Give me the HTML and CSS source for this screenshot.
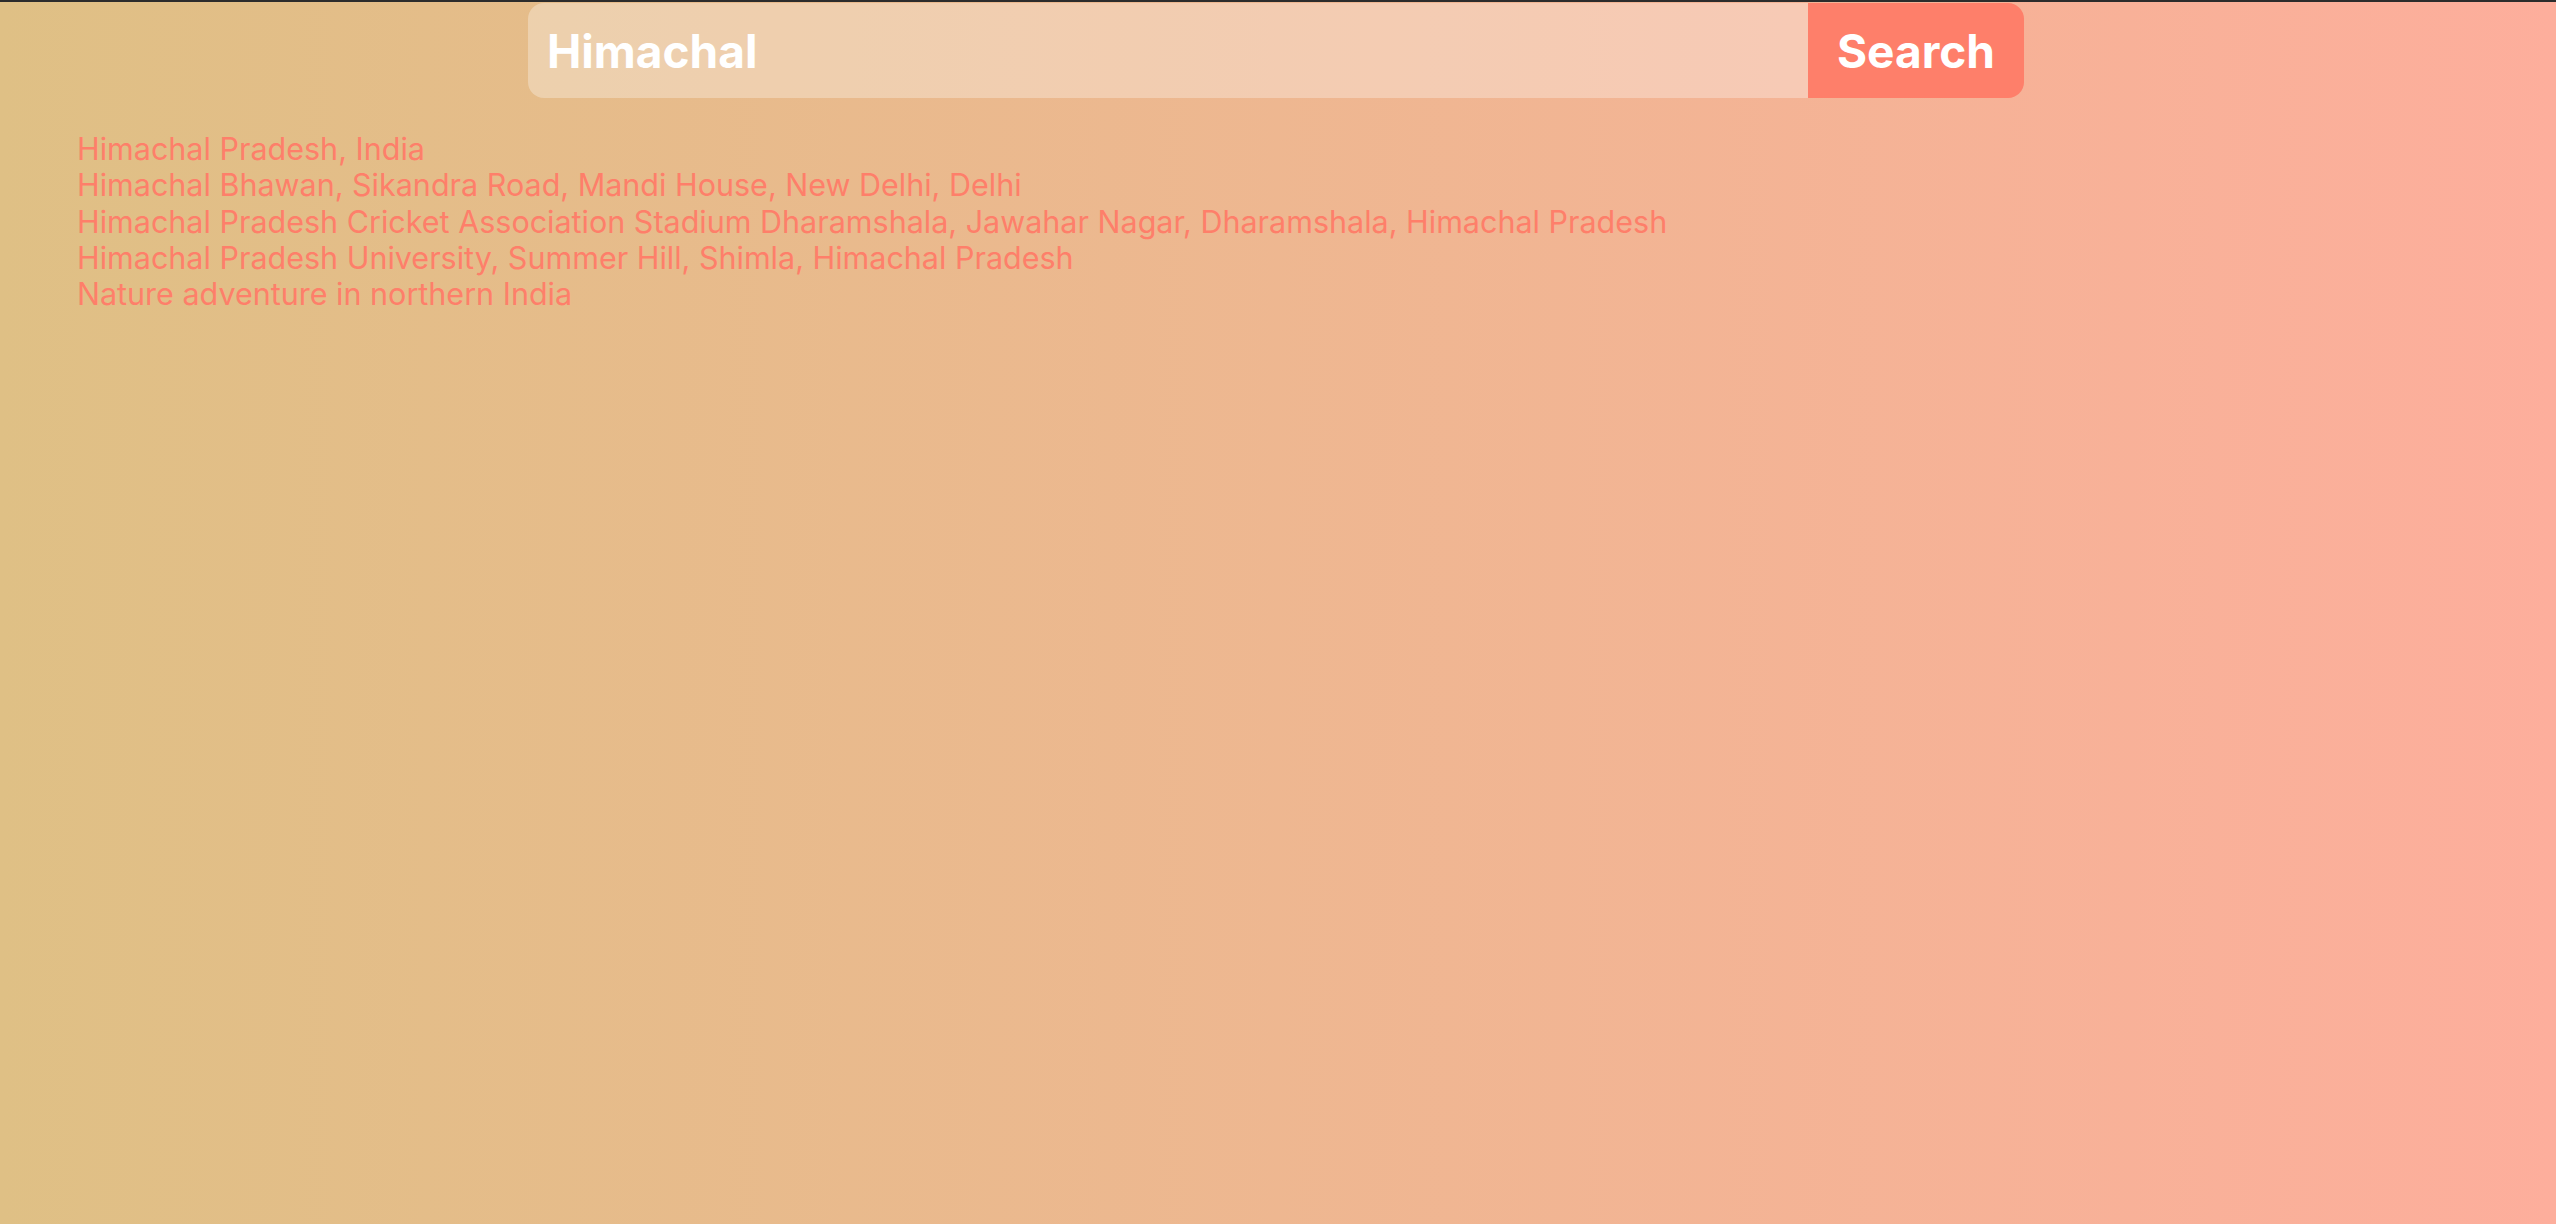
FILE: index.html
```html
<!DOCTYPE html>
<html>
<head>
<meta charset="utf-8">
<link rel="stylesheet" href="styles.css">
</head>
<body>
<div class="page">
  <form class="search">
    <input class="search-input" type="text" value="Himachal">
    <button class="search-btn" type="button">Search</button>
  </form>
  <ul class="results">
    <li>Himachal Pradesh, India</li>
    <li>Himachal Bhawan, Sikandra Road, Mandi House, New Delhi, Delhi</li>
    <li>Himachal Pradesh Cricket Association Stadium Dharamshala, Jawahar Nagar, Dharamshala, Himachal Pradesh</li>
    <li>Himachal Pradesh University, Summer Hill, Shimla, Himachal Pradesh</li>
    <li>Nature adventure in northern India</li>
  </ul>
</div>
</body>
</html>
```
FILE: styles.css
```css
html, body {
  margin: 0;
  padding: 0;
  height: 100%;
}
body {
  font-family: Inter, "Noto Sans", sans-serif;
  background: linear-gradient(to right, #dfc085, #fdae9c);
  border-top: 2px solid #2c2c2c;
  box-sizing: border-box;
  overflow: hidden;
}
.page {
  display: flex;
  flex-direction: column;
  padding-right: 4px;
}
.search {
  display: flex;
  width: 1496px;
  height: 95px;
  margin: 1px auto 0;
  border-radius: 16px;
  overflow: hidden;
}
.search-input {
  flex: 1;
  border: none;
  outline: none;
  background: rgba(255, 255, 255, 0.3);
  color: #fff;
  font-family: Inter, sans-serif;
  font-weight: 700;
  font-size: 46px;
  padding: 0 19px;
  margin: 0;
}
.search-btn {
  width: 216px;
  border: none;
  background: #fe7f6a;
  color: #fff;
  font-family: Inter, sans-serif;
  font-weight: 700;
  font-size: 46px;
  padding: 0;
  margin: 0;
}
.results {
  list-style: none;
  margin: 33px 0 0;
  padding: 0 0 0 77px;
  color: #fe7f6a;
  font-size: 30.5px;
  line-height: 36.3px;
}
```
